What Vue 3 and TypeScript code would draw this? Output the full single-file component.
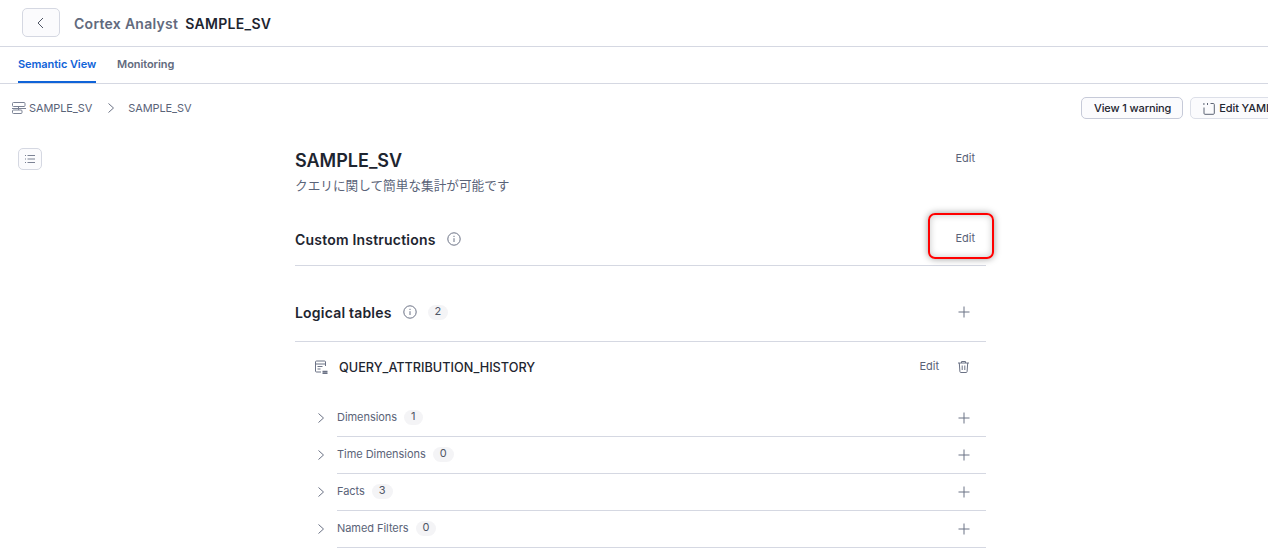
<script setup lang="ts">
interface Section {
  name: string;
  count: number;
}

const sections: Section[] = [
  { name: 'Dimensions', count: 1 },
  { name: 'Time Dimensions', count: 0 },
  { name: 'Facts', count: 3 },
  { name: 'Named Filters', count: 0 },
];
</script>

<template>
  <div class="page">
    <header class="top">
      <button class="back" type="button">
        <svg width="12" height="12" viewBox="0 0 12 12" fill="none"><path d="M8 1 3 6l5 5" stroke="#4f5665" stroke-width="1" /></svg>
      </button>
      <span class="product">Cortex Analyst</span>
      <span class="view-name">SAMPLE_SV</span>
    </header>

    <nav class="tabs">
      <a class="tab active">Semantic View</a>
      <a class="tab">Monitoring</a>
    </nav>

    <div class="crumbs">
      <svg class="crumb-icon" width="14" height="14" viewBox="0 0 14 14" fill="none" stroke="#7b8294" stroke-width="1">
        <rect x="0.5" y="1.5" width="12.5" height="4" rx="1" />
        <rect x="0.5" y="9" width="9.5" height="3.5" rx="1" />
        <path d="M6.5 5.5V9M0 7.5h14" />
      </svg>
      <span>SAMPLE_SV</span>
      <svg class="crumb-sep" width="10" height="12" viewBox="0 0 10 12" fill="none"><path d="M2.5 1.5 7.5 6l-5 4.5" stroke="#6b7285" stroke-width="1" /></svg>
      <span>SAMPLE_SV</span>
      <div class="crumb-actions">
        <button class="btn" type="button">View 1 warning</button>
        <button class="btn yaml" type="button">
          <svg width="12" height="13" viewBox="0 0 12 13" fill="none" stroke="#5d6474" stroke-width="1">
            <path d="M7.5 1.5h2.8a1 1 0 0 1 1 1v8.8a1 1 0 0 1-1 1H2a1 1 0 0 1-1-1V5.5" />
            <path d="M1.4 1 .4 2l1 1M4 1l1 1-1 1" />
          </svg>
          Edit YAML
        </button>
      </div>
    </div>

    <div class="body">
      <aside class="side">
        <button class="outline" type="button">
          <svg width="12" height="12" viewBox="0 0 12 12" fill="none" stroke="#7b8294" stroke-width="1">
            <path d="M3.5 2.5H11M3.5 6H11M3.5 9.5H11M1 2.5h1M1 6h1M1 9.5h1" />
          </svg>
        </button>
      </aside>

      <main class="main">
        <section class="intro">
          <div class="intro-row">
            <h1>SAMPLE_SV</h1>
            <a class="edit">Edit</a>
          </div>
          <p class="desc">クエリに関して簡単な集計が可能です</p>
        </section>

        <section class="block custom">
          <h2>Custom Instructions</h2>
          <svg class="info" width="14" height="14" viewBox="0 0 14 14" fill="none" stroke="#6b7285"><circle cx="7" cy="7" r="6.2" /><path d="M7 6.2v3.8M7 3.8v1.2" /></svg>
          <a class="edit">Edit</a>
          <div class="callout"></div>
        </section>

        <section class="block logical">
          <h2>Logical tables</h2>
          <svg class="info" width="14" height="14" viewBox="0 0 14 14" fill="none" stroke="#6b7285"><circle cx="7" cy="7" r="6.2" /><path d="M7 6.2v3.8M7 3.8v1.2" /></svg>
          <span class="count">2</span>
          <svg class="plus end" width="12" height="12" viewBox="0 0 12 12" fill="none"><path d="M6 .5v11M.5 6h11" stroke="#6b7285" /></svg>
        </section>

        <section class="table-card">
          <div class="table-head">
            <svg class="table-icon" width="14" height="14" viewBox="0 0 14 14" fill="none" stroke="#6b7285">
              <path d="M11.5 6V2a1 1 0 0 0-1-1h-8a1 1 0 0 0-1 1v9a1 1 0 0 0 1 1H7" />
              <path d="M1.5 4h10M3.5 6.5h5M3.5 9h3" />
              <path d="M8.5 11.5h5M8.5 13.2h5" stroke-width="1.4" />
            </svg>
            <span class="table-name">QUERY_ATTRIBUTION_HISTORY</span>
            <a class="edit">Edit</a>
            <svg class="trash" width="13" height="13" viewBox="0 0 13 13" fill="none" stroke="#6b7285">
              <path d="M1 3h11M4.5 3V1.5h4V3M2.3 3l.6 8.6a1 1 0 0 0 1 .9h5.2a1 1 0 0 0 1-.9l.6-8.6M5.2 5.5v4.5M7.8 5.5v4.5" />
            </svg>
          </div>

          <div v-for="s in sections" :key="s.name" class="row">
            <svg class="chev" width="8" height="12" viewBox="0 0 8 12" fill="none"><path d="M1.5 1.5 6.5 6l-5 4.5" stroke="#6b7285" /></svg>
            <div class="row-line">
              <span class="row-name">{{ s.name }}</span>
              <span class="count">{{ s.count }}</span>
              <svg class="plus end" width="12" height="12" viewBox="0 0 12 12" fill="none"><path d="M6 .5v11M.5 6h11" stroke="#6b7285" /></svg>
            </div>
          </div>
        </section>
      </main>
    </div>
  </div>
</template>

<style>
html,
body {
  margin: 0;
  background: #fff;
  overflow: hidden;
}
</style>

<style scoped>
.page {
  width: 1268px;
  height: 558px;
  overflow: hidden;
  font-family: Inter, "Noto Sans CJK JP", sans-serif;
  color: #1e2530;
}

.top {
  height: 46px;
  display: flex;
  align-items: center;
  padding-left: 22px;
  border-bottom: 1px solid #d5d8e2;
}

.back {
  width: 38px;
  height: 29px;
  padding: 0;
  display: flex;
  align-items: center;
  justify-content: center;
  margin-top: -1px;
  background: #fbfbfd;
  border: 1px solid #d5d8e2;
  border-radius: 5px;
}

.product {
  margin-left: 14px;
  font-size: 14px;
  font-weight: 600;
  letter-spacing: 0.28px;
  color: #626a7d;
}

.view-name {
  margin-left: 7px;
  font-size: 14px;
  font-weight: 600;
  letter-spacing: 0.3px;
  color: #1e2530;
}

.tabs {
  height: 36px;
  display: flex;
  gap: 21px;
  padding-left: 18px;
  border-bottom: 1px solid #d5d8e2;
}

.tab {
  height: 34px;
  line-height: 34px;
  font-size: 11px;
  font-weight: 600;
  letter-spacing: -0.07px;
  color: #626a7d;
}

.tab.active {
  color: #0f63d8;
  border-bottom: 2px solid #0f63d8;
}

.crumbs {
  height: 48px;
  display: flex;
  align-items: center;
  padding-left: 12px;
  font-size: 11px;
  letter-spacing: -0.1px;
  color: #5a6378;
}

.crumb-icon {
  margin-right: 3px;
}

.crumb-sep {
  margin: 0 12.5px 0 13.5px;
}

.crumb-actions {
  margin-left: auto;
  display: flex;
  gap: 7px;
  margin-right: -17px;
}

.btn {
  height: 22px;
  padding: 0 11px 0 12px;
  display: flex;
  align-items: center;
  gap: 4px;
  font-family: inherit;
  font-size: 11px;
  font-weight: 500;
  letter-spacing: -0.12px;
  white-space: nowrap;
  color: #1e2530;
  background: #fbfbfd;
  border: 1px solid #c6cad8;
  border-radius: 5px;
}

.yaml {
  padding: 0 12px;
  border-color: #dcdfe8;
}

.body {
  display: flex;
}

.side {
  width: 295px;
  flex: none;
  padding: 16px 0 0 18px;
  box-sizing: border-box;
}

.outline {
  width: 24px;
  height: 22px;
  padding: 0;
  display: flex;
  align-items: center;
  justify-content: center;
  background: #fbfbfd;
  border: 1px solid #d5d8e2;
  border-radius: 5px;
}

.main {
  width: 691px;
  flex: none;
}

.intro {
  padding-top: 16px;
}

.intro-row {
  display: flex;
  align-items: center;
  padding-right: 11px;
  height: 24px;
}

.intro-row .edit {
  margin-top: -4px;
}

h1 {
  margin: 0;
  font-size: 18px;
  font-weight: 600;
  color: #1e2530;
}

h2 {
  margin: 0;
  font-size: 14px;
  font-weight: 600;
  letter-spacing: 0.2px;
  color: #1e2530;
}

.desc {
  margin: 5px 0 0;
  font-size: 12.65px;
  line-height: 18px;
  color: #5a6378;
}

.edit {
  margin-left: auto;
  font-size: 11px;
  color: #5a6378;
}

.block {
  position: relative;
  display: flex;
  align-items: center;
  padding-right: 11px;
}

.custom {
  height: 55px;
  margin-top: 16px;
  padding-top: 2px;
  box-sizing: border-box;
  border-bottom: 1px solid #d5d8e2;
}

.custom .edit {
  margin-top: -2px;
}

.custom .info {
  margin-top: -1px;
}

.logical {
  height: 76px;
  box-sizing: border-box;
  padding-top: 17px;
  padding-right: 16px;
  border-bottom: 1px solid #d5d8e2;
}

.info {
  margin-left: 11px;
}

.end {
  margin-left: auto;
}

.callout {
  position: absolute;
  left: 633px;
  top: 2px;
  width: 66px;
  height: 46px;
  box-sizing: border-box;
  border: 2px solid #f00;
  border-radius: 7px;
  box-shadow: 0 0 7px rgba(0, 0, 0, 0.4), inset 0 0 7px rgba(0, 0, 0, 0.22);
}

.count {
  margin-left: 11px;
  padding: 0 7px;
  height: 15px;
  line-height: 13px;
  text-align: center;
  font-size: 11px;
  color: #4f5665;
  background: #f4f4f6;
  border-radius: 8px;
}

.table-head {
  height: 58px;
  display: flex;
  align-items: center;
  padding: 0 16px 8px 19px;
  box-sizing: border-box;
}

.table-icon {
  margin-right: 11px;
  flex: none;
}

.table-name {
  font-size: 12.7px;
  font-weight: 500;
  color: #1e2530;
}

.table-head .edit {
  margin-top: -2px;
}

.trash {
  margin-left: 18px;
  margin-top: -1px;
}

.row {
  height: 37px;
  display: flex;
  align-items: stretch;
}

.chev {
  margin: 12px 12px 0 22px;
  flex: none;
}

.row-line {
  flex: 1;
  display: flex;
  align-items: center;
  padding-right: 16px;
  box-sizing: border-box;
  border-bottom: 1px solid #d5d8e2;
}

.row-name {
  font-size: 11px;
  letter-spacing: -0.05px;
  color: #5a6378;
  margin-top: -2px;
}

.row-line .count {
  margin-left: 7px;
  margin-top: -2px;
}
</style>
